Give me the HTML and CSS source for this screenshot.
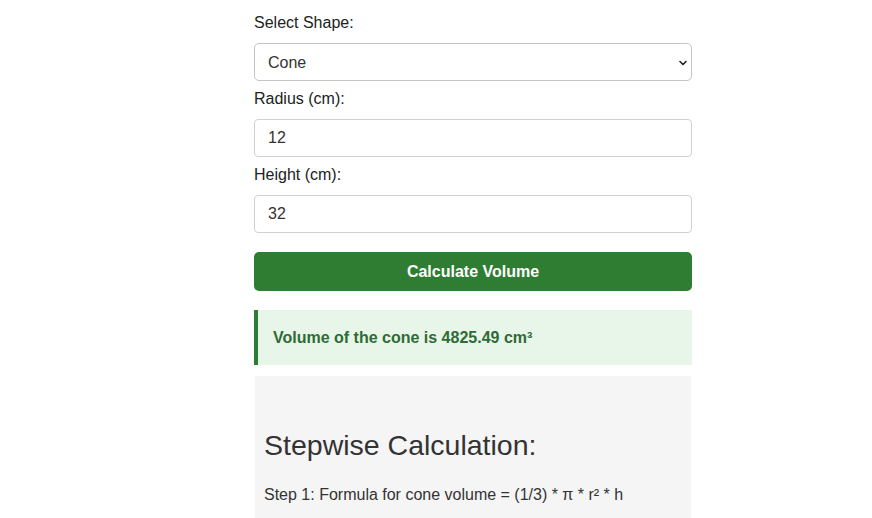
FILE: index.html
```html
<!DOCTYPE html>
<html>
<head>
<meta charset="utf-8">
<link rel="stylesheet" href="styles.css">
</head>
<body>
<div class="page">
  <div class="calc">
    <label class="label first" for="shape">Select Shape:</label>
    <div class="select-wrap">
      <select id="shape" class="field">
        <option>Cone</option>
      </select>
      <svg class="chev" width="10" height="10" viewBox="0 0 10 10"><path d="M2 3.5 L5 6.5 L8 3.5" fill="none" stroke="#222" stroke-width="1.6" stroke-linecap="round" stroke-linejoin="round"/></svg>
    </div>
    <label class="label" for="radius">Radius (cm):</label>
    <input id="radius" class="field" type="text" value="12">
    <label class="label" for="height">Height (cm):</label>
    <input id="height" class="field" type="text" value="32">
    <button class="btn">Calculate Volume</button>
    <div class="result">Volume of the cone is 4825.49 cm³</div>
    <div class="steps">
      <h2 class="steps-title">Stepwise Calculation:</h2>
      <p class="step">Step 1: Formula for cone volume = (1/3) * π * r² * h</p>
    </div>
  </div>
</div>
</body>
</html>
```

FILE: styles.css
```css
html, body {
  margin: 0;
  padding: 0;
  background: #ffffff;
}
body {
  font-family: "Liberation Sans", Arial, sans-serif;
  color: #222;
  overflow: hidden;
}
.page {
  padding-left: 254px;
  padding-top: 14px;
}
.calc {
  width: 438px;
  display: flex;
  flex-direction: column;
}
.label {
  display: block;
  font-size: 16px;
  line-height: 18px;
  color: #222;
  margin-top: 9px;
  margin-bottom: 11px;
}
.label.first {
  margin-top: 0;
  margin-bottom: 11px;
}
.select-wrap {
  position: relative;
}
.field {
  box-sizing: border-box;
  width: 438px;
  height: 38px;
  border: 1px solid #d0d0d0;
  border-radius: 4px;
  padding: 0 13px;
  font-family: "Liberation Sans", Arial, sans-serif;
  font-size: 16px;
  color: #333;
  background: #fff;
  outline: none;
  display: block;
}
select.field {
  appearance: none;
  -webkit-appearance: none;
  border-color: #c4c4c4;
  border-radius: 5px;
}
.chev {
  position: absolute;
  right: 4px;
  top: 15px;
}
.btn {
  margin-top: 19px;
  height: 39px;
  border: none;
  border-radius: 5px;
  background: #2e7d32;
  color: #fff;
  font-family: "Liberation Sans", Arial, sans-serif;
  font-weight: bold;
  font-size: 16px;
  width: 438px;
}
.result {
  margin-top: 19px;
  height: 55px;
  box-sizing: border-box;
  border-left: 4px solid #2e7d32;
  background: #e8f5e9;
  color: #2f6b35;
  font-weight: bold;
  font-size: 16px;
  display: flex;
  align-items: center;
  padding-left: 15px;
}
.steps {
  margin-top: 11px;
  margin-left: 1px;
  margin-right: 1px;
  background: #f5f5f5;
  padding: 54px 9px 30px;
}
.steps-title {
  margin: 0;
  font-size: 28.5px;
  line-height: 30px;
  font-weight: normal;
  color: #333;
}
.step {
  margin: 26px 0 0;
  font-size: 16px;
  line-height: 18px;
  color: #333;
}
```
